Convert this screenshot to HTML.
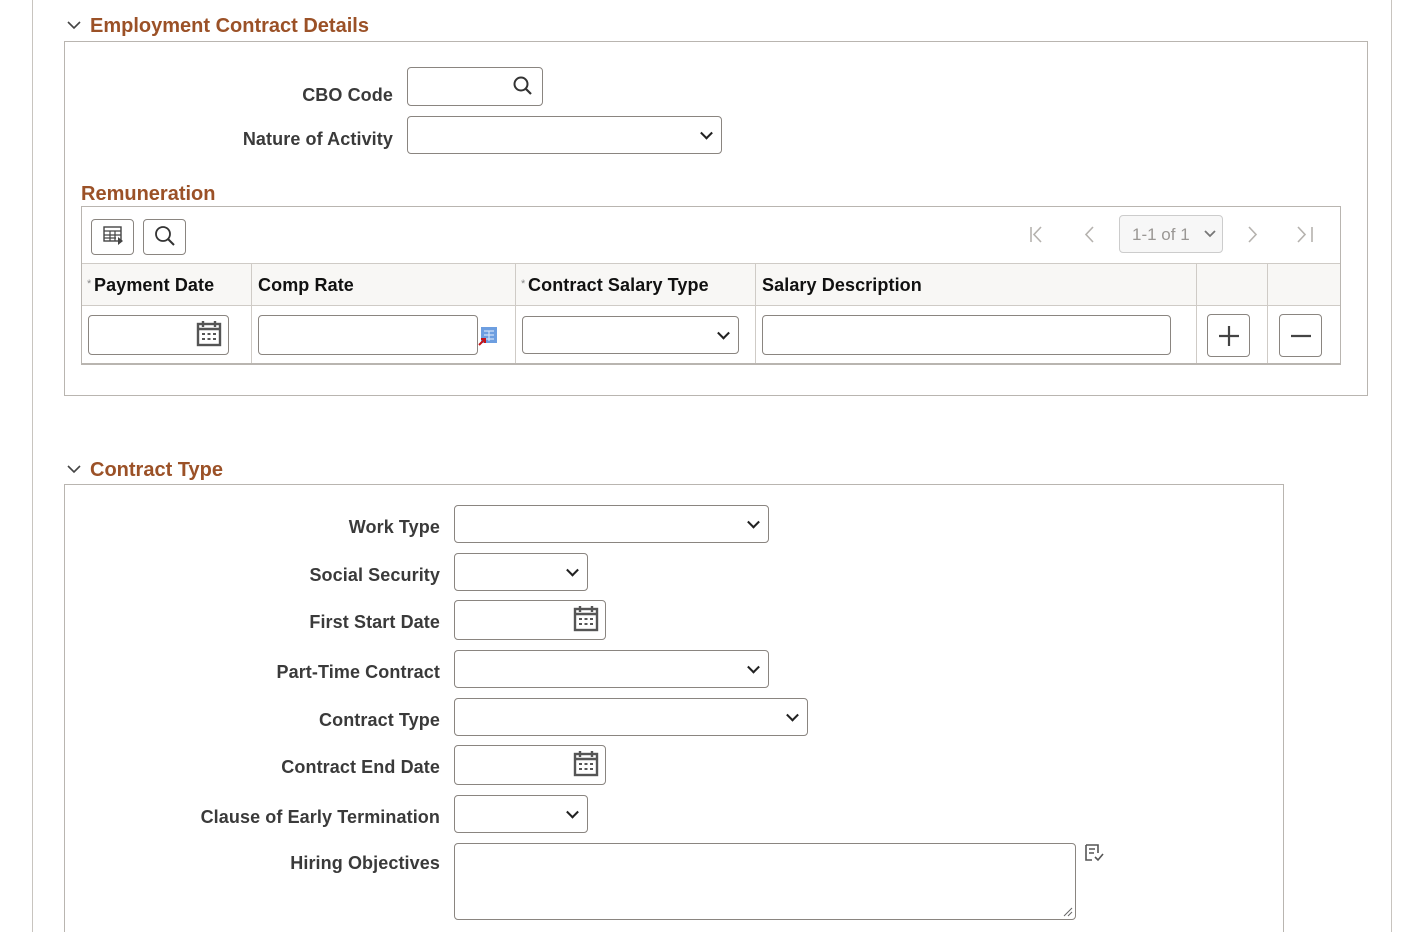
<!DOCTYPE html>
<html><head><meta charset="utf-8"><style>
*{box-sizing:border-box}
html,body{margin:0;width:1404px;height:932px;overflow:hidden}
body{background:#fff;font-family:"Liberation Sans",Arial,sans-serif;position:relative}
.a{position:absolute}
.vl{position:absolute;top:0;width:1px;height:932px;background:#c8c4bf}
.h{position:absolute;color:#9b5127;font-weight:bold;font-size:20px}
.box{position:absolute;border:1px solid #b9b5b0}
.lbl{position:absolute;color:#3a3a3a;font-weight:bold;font-size:18px;text-align:right;letter-spacing:0.1px}
.in{position:absolute;border:1px solid #8a8580;border-radius:4px;background:#fff}
.sel::after{content:"";position:absolute;right:10px;top:50%;width:7px;height:7px;border-right:2px solid #222;border-bottom:2px solid #222;transform:translateY(-70%) rotate(45deg)}
.th{position:absolute;font-weight:bold;font-size:18px;color:#111;letter-spacing:0.1px}
.btn{position:absolute;border:1px solid #8a8580;border-radius:4px;background:#fff}
</style></head><body>
<div class="vl" style="left:32px"></div>
<div class="vl" style="left:1391px"></div>

<svg class="a" style="left:66px;top:18px" width="16" height="14"><path d="M2 4l6 6 6-6" stroke="#444" stroke-width="1.6" fill="none"/></svg>
<div class="h" style="left:90px;top:15px">Employment Contract Details</div>
<div class="box" style="left:64px;top:41px;width:1304px;height:355px"></div>

<div class="lbl" style="left:200px;width:193px;top:85px">CBO Code</div>
<div class="in" style="left:407px;top:67px;width:136px;height:39px"></div>
<svg class="a" style="left:512px;top:75px" width="22" height="22"><circle cx="9" cy="9" r="6.5" stroke="#333" stroke-width="2" fill="none"/><path d="M14 14l5 5" stroke="#333" stroke-width="2.2"/></svg>
<div class="lbl" style="left:200px;width:193px;top:129px">Nature of Activity</div>
<div class="in sel" style="left:407px;top:116px;width:315px;height:38px"></div>

<div class="h" style="left:81px;top:183px">Remuneration</div>
<div class="box" style="left:81px;top:206px;width:1260px;height:159px;border-bottom:2px solid #b9b5b0"></div>
<div class="btn" style="left:91px;top:219px;width:43px;height:36px"></div>
<svg class="a" style="left:103px;top:225px" width="22" height="22"><rect x="1" y="2" width="17" height="14" fill="none" stroke="#444" stroke-width="1.4"/><path d="M1 6h17M1 10h17M1 13h12M7 6v10M12 6v10" stroke="#444" stroke-width="1.2"/><path d="M15 12l5 4-5 4z" fill="#444"/></svg>
<div class="btn" style="left:143px;top:219px;width:43px;height:36px"></div>
<svg class="a" style="left:153px;top:224px" width="24" height="24"><circle cx="10" cy="10" r="7" stroke="#333" stroke-width="1.8" fill="none"/><path d="M15 15l6 6" stroke="#333" stroke-width="2"/></svg>

<svg class="a" style="left:1025px;top:224px" width="300" height="22" fill="none" stroke="#b5b2ae" stroke-width="1.6"><path d="M6 3v15M16 3l-7 7.5 7 7.5"/><path d="M68 3l-7 7.5 7 7.5"/><path d="M224 3l7 7.5-7 7.5"/><path d="M273 3l7 7.5-7 7.5M287 3v15"/></svg>
<div class="a" style="left:1119px;top:215px;width:104px;height:38px;border:1px solid #ccc;border-radius:4px;background:#f7f7f7;color:#9a9794;font-size:17px;padding:9px 0 0 12px">1-1 of 1</div>
<svg class="a" style="left:1203px;top:229px" width="14" height="10"><path d="M2 2l5 5 5-5" stroke="#777" stroke-width="1.8" fill="none"/></svg>

<div class="a" style="left:82px;top:263px;width:1258px;height:43px;background:#f8f7f5;border-top:1px solid #cfcbc6;border-bottom:1px solid #cfcbc6"></div>
<div class="a" style="left:251px;top:263px;width:1px;height:100px;background:#cfcbc6"></div>
<div class="a" style="left:515px;top:263px;width:1px;height:100px;background:#cfcbc6"></div>
<div class="a" style="left:755px;top:263px;width:1px;height:100px;background:#cfcbc6"></div>
<div class="a" style="left:1196px;top:263px;width:1px;height:100px;background:#cfcbc6"></div>
<div class="a" style="left:1267px;top:263px;width:1px;height:100px;background:#cfcbc6"></div>
<div class="a" style="left:87px;top:278px;font-size:11px;color:#888">*</div>
<div class="th" style="left:94px;top:275px">Payment Date</div>
<div class="th" style="left:258px;top:275px">Comp Rate</div>
<div class="a" style="left:521px;top:278px;font-size:11px;color:#888">*</div>
<div class="th" style="left:528px;top:275px">Contract Salary Type</div>
<div class="th" style="left:762px;top:275px">Salary Description</div>

<div class="in" style="left:88px;top:315px;width:141px;height:40px"></div>
<svg class="a" style="left:196px;top:320px" width="26" height="28"><rect x="2" y="4" width="22" height="21" fill="none" stroke="#555" stroke-width="2.4"/><path d="M2 9h22M7 1v6M19 1v6" stroke="#555" stroke-width="2.4"/><path d="M6 14h3M11.5 14h3M17 14h3M6 19h3M11.5 19h3M17 19h3" stroke="#555" stroke-width="2"/></svg>
<div class="in" style="left:258px;top:315px;width:220px;height:40px"></div>
<svg class="a" style="left:478px;top:327px" width="20" height="20"><rect x="3" y="0" width="16" height="16" fill="#6d9ee0"/><path d="M6 4h10M6 8h10M6 12h10M11 4v10" stroke="#cfe0f8" stroke-width="1.2"/><path d="M1 18l6-6M3 12h4v4" stroke="#c4141a" stroke-width="2" fill="none"/></svg>
<div class="in sel" style="left:522px;top:316px;width:217px;height:38px"></div>
<div class="in" style="left:762px;top:315px;width:409px;height:40px"></div>
<div class="btn" style="left:1207px;top:314px;width:43px;height:43px"></div>
<svg class="a" style="left:1218px;top:325px" width="22" height="22"><path d="M11 1v20M1 11h20" stroke="#444" stroke-width="2.2"/></svg>
<div class="btn" style="left:1279px;top:314px;width:43px;height:43px"></div>
<svg class="a" style="left:1290px;top:325px" width="22" height="22"><path d="M1 11h20" stroke="#444" stroke-width="2.2"/></svg>

<svg class="a" style="left:66px;top:462px" width="16" height="14"><path d="M2 4l6 6 6-6" stroke="#444" stroke-width="1.6" fill="none"/></svg>
<div class="h" style="left:90px;top:459px">Contract Type</div>
<div class="box" style="left:64px;top:484px;width:1220px;height:480px"></div>

<div class="lbl" style="left:150px;width:290px;top:517px">Work Type</div>
<div class="in sel" style="left:454px;top:505px;width:315px;height:38px"></div>
<div class="lbl" style="left:150px;width:290px;top:565px">Social Security</div>
<div class="in sel" style="left:454px;top:553px;width:134px;height:38px"></div>
<div class="lbl" style="left:150px;width:290px;top:612px">First Start Date</div>
<div class="in" style="left:454px;top:600px;width:152px;height:40px"></div>
<svg class="a" style="left:573px;top:605px" width="26" height="28"><rect x="2" y="4" width="22" height="21" fill="none" stroke="#555" stroke-width="2.4"/><path d="M2 9h22M7 1v6M19 1v6" stroke="#555" stroke-width="2.4"/><path d="M6 14h3M11.5 14h3M17 14h3M6 19h3M11.5 19h3M17 19h3" stroke="#555" stroke-width="2"/></svg>
<div class="lbl" style="left:150px;width:290px;top:662px">Part-Time Contract</div>
<div class="in sel" style="left:454px;top:650px;width:315px;height:38px"></div>
<div class="lbl" style="left:150px;width:290px;top:710px">Contract Type</div>
<div class="in sel" style="left:454px;top:698px;width:354px;height:38px"></div>
<div class="lbl" style="left:150px;width:290px;top:757px">Contract End Date</div>
<div class="in" style="left:454px;top:745px;width:152px;height:40px"></div>
<svg class="a" style="left:573px;top:750px" width="26" height="28"><rect x="2" y="4" width="22" height="21" fill="none" stroke="#555" stroke-width="2.4"/><path d="M2 9h22M7 1v6M19 1v6" stroke="#555" stroke-width="2.4"/><path d="M6 14h3M11.5 14h3M17 14h3M6 19h3M11.5 19h3M17 19h3" stroke="#555" stroke-width="2"/></svg>
<div class="lbl" style="left:150px;width:290px;top:807px">Clause of Early Termination</div>
<div class="in sel" style="left:454px;top:795px;width:134px;height:38px"></div>
<div class="lbl" style="left:150px;width:290px;top:853px">Hiring Objectives</div>
<div class="in" style="left:454px;top:843px;width:622px;height:77px"></div>
<svg class="a" style="left:1062px;top:906px" width="12" height="12"><path d="M2 10l8-8M6 10l4-4" stroke="#666" stroke-width="1"/></svg>
<svg class="a" style="left:1084px;top:843px" width="22" height="20"><path d="M2 2h12v8M2 2v15h6M5 6h6M5 10h5" stroke="#555" stroke-width="1.6" fill="none"/><path d="M11 14l3 3 5-6" stroke="#555" stroke-width="1.6" fill="none"/></svg>
</body></html>
